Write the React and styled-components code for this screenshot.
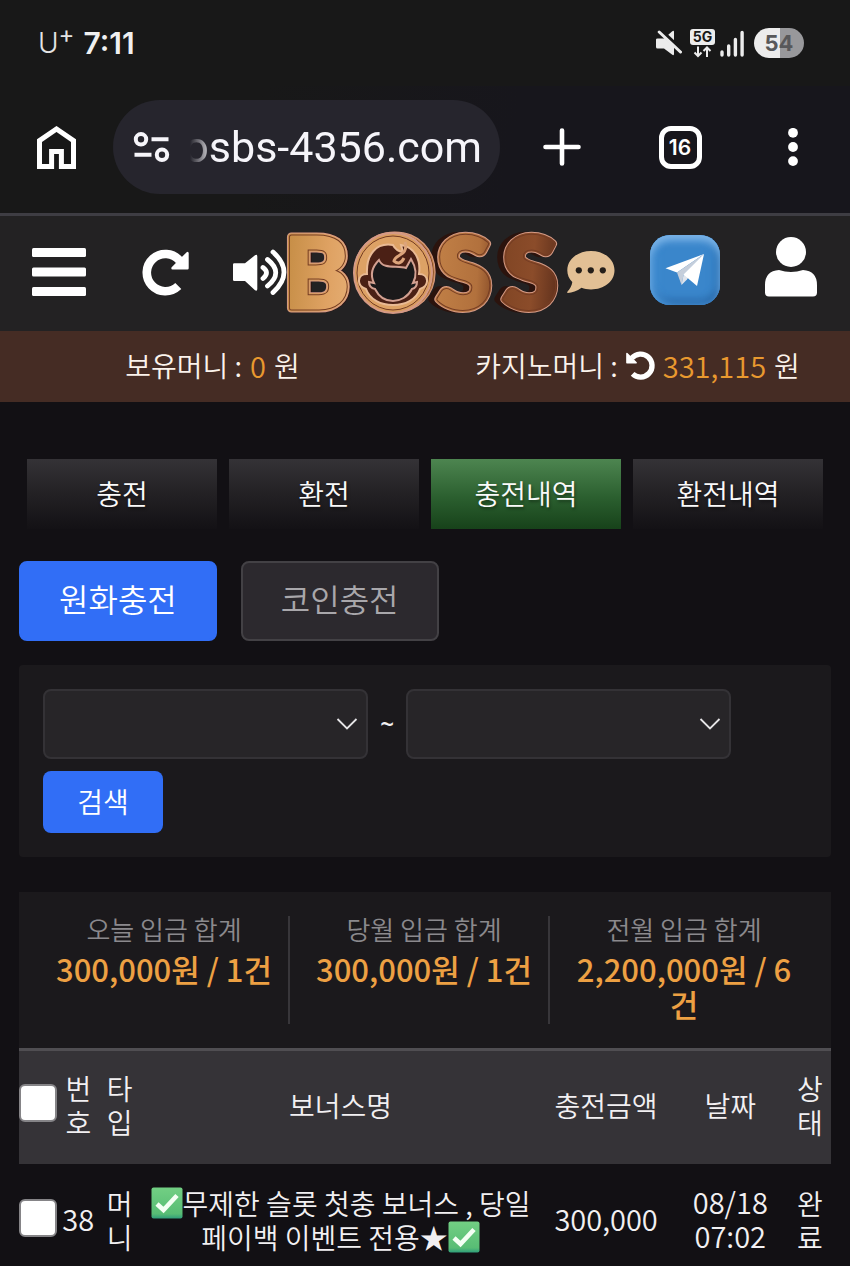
import React from 'react';
import styled, { createGlobalStyle } from 'styled-components';

const korean = '"Noto Sans CJK KR", "Noto Sans", sans-serif';

const GlobalStyle = createGlobalStyle`
  *, *::before, *::after { box-sizing: border-box; }
  body { margin: 0; background: #121014; color: #f2f0f2; font-family: ${korean}; font-size: 28px; font-weight: 350; }
  button, input, select { font: inherit; color: inherit; margin: 0; }
  svg { display: block; flex: none; }
`;

/* ---------- device status bar ---------- */
const StatusBar = styled.div`
  display: flex;
  align-items: center;
  justify-content: space-between;
  height: 86px;
  padding: 0 46px 0 38px;
  background: #181818;
  font-family: Inter, "Liberation Sans", sans-serif;
`;
const StatusGroup = styled.div`
  display: flex;
  align-items: center;
  gap: ${(p) => p.$gap}px;
`;
const Carrier = styled.span`
  display: flex;
  font-size: 28px;
  font-weight: 300;
  line-height: 36px;
  color: #e4e4e4;
  sup { font-size: 24px; font-weight: 400; line-height: 20px; }
`;
const Clock = styled.time`
  font-size: 30px;
  font-weight: 600;
  line-height: 36px;
  color: #f0f0f0;
`;
const Battery = styled.span`
  display: grid;
  place-items: center;
  width: 50px;
  height: 30px;
  margin-left: 4px;
  border-radius: 15px;
  background: linear-gradient(90deg, #ececec 52%, #98989b 52%);
  color: #58585a;
  font-size: 22px;
  font-weight: 700;
`;

/* ---------- browser toolbar ---------- */
const BrowserBar = styled.div`
  display: grid;
  grid-template-columns: 113px minmax(0, 1fr) 124px 112px 114px;
  align-items: center;
  padding: 14px 0 19px;
  background: linear-gradient(100deg, #181818 30%, #17161c 60%);
`;
const IconButton = styled.button`
  display: flex;
  align-items: center;
  justify-content: ${(p) => p.$align || 'center'};
  width: 100%;
  padding: 0 0 ${(p) => p.$lift || 0}px;
  border: 0;
  background: none;
  color: #fff;
  cursor: pointer;
`;
const AddressPill = styled.div`
  display: flex;
  align-items: center;
  gap: 12px;
  height: 94px;
  padding: 0 18px 0 20px;
  border-radius: 47px;
  background: #26252d;
`;
const Address = styled.input`
  flex: 1;
  min-width: 0;
  height: 64px;
  padding: 0;
  border: 0;
  outline: 0;
  background: none;
  color: #f6f5fa;
  font-family: Roboto, "Liberation Sans", sans-serif;
  font-size: 43px;
  font-weight: 400;
  text-align: right;
  mask-image: linear-gradient(90deg, transparent 8px, #000 32px);
`;
const TabCount = styled.span`
  display: grid;
  place-items: center;
  width: 43px;
  height: 43px;
  border: 5px solid #fff;
  border-radius: 12px;
  font-family: Inter, sans-serif;
  font-size: 21px;
  font-weight: 600;
`;

/* ---------- site header ---------- */
const SiteHeader = styled.header`
  display: grid;
  grid-template-columns: 118px 94px 75px minmax(0, 1fr) 75px 95px 118px;
  align-items: center;
  height: 118px;
  padding-bottom: 3px;
  border-top: 3px solid #3e3d43;
  background: #232223;
`;
const LogoLink = styled.a`
  display: flex;
  justify-content: center;
  svg { overflow: visible; }
`;
const ChatButton = styled(IconButton)`
  padding-left: 5px;
`;
const TelegramLink = styled.a`
  display: grid;
  place-items: center;
  justify-self: center;
  width: 70px;
  height: 70px;
  margin-bottom: 5px;
  border-radius: 20px;
  background: #3a86cb;
  box-shadow: inset 0 6px 7px #79b2e6, inset 6px 0 7px #4590d3, inset 0 -6px 7px #2d6eaf, inset -6px 0 7px #337abd;
`;
const MoneyBar = styled.section`
  display: flex;
  height: 71px;
  background: #452c24;
  color: #fbf3ec;
`;
const Money = styled.p`
  display: flex;
  flex: 1;
  align-items: center;
  justify-content: center;
  gap: 8px;
  margin: 0;
  padding-bottom: 3px;
  line-height: 40px;
  white-space: nowrap;
`;
const Amount = styled.span`
  color: #e9992f;
  font-size: 29px;
`;
const InlineButton = styled.button`
  padding: 0;
  border: 0;
  background: none;
  color: #fff;
  cursor: pointer;
`;

/* ---------- page ---------- */
const TabNav = styled.nav`
  display: grid;
  grid-template-columns: repeat(4, 1fr);
  gap: 12px;
  padding: 57px 27px 0;
`;
const TabLink = styled.a`
  display: grid;
  place-items: center;
  height: 70px;
  padding-bottom: 2px;
  color: #fafafa;
  line-height: 40px;
  text-decoration: none;
  text-shadow: 1px 2px 3px #0006;
  background: ${(p) =>
    p.$active ? 'linear-gradient(#4d8550, #2b5f2f 55%, #17421a)' : 'linear-gradient(#343236, #232124 50%, #131115)'};
`;
const Content = styled.main`
  padding: 32px 19px 0;
`;
const Methods = styled.div`
  display: flex;
  gap: 24px;
`;
const MethodButton = styled.button`
  height: 80px;
  padding: 0 38px 6px;
  border: 2px solid ${(p) => (p.$active ? '#316ef6' : '#434145')};
  border-radius: 8px;
  background: ${(p) => (p.$active ? '#316ef6' : '#2c292e')};
  color: ${(p) => (p.$active ? '#fff' : '#a9a7ab')};
  font-size: 32px;
  line-height: 48px;
  cursor: pointer;
`;
const FilterForm = styled.form`
  display: flex;
  flex-wrap: wrap;
  align-items: center;
  gap: 12px;
  margin-top: 24px;
  padding: 24px;
  border-radius: 4px;
  background: #1b191c;
`;
const DatePick = styled.label`
  display: grid;
  grid-template-areas: "field";
  align-items: center;
  flex: 0 1 325px;
  svg { grid-area: field; justify-self: end; margin-right: 10px; pointer-events: none; }
`;
const DateSelect = styled.select`
  grid-area: field;
  appearance: none;
  width: 100%;
  height: 70px;
  padding: 0 40px 0 16px;
  border: 2px solid #343236;
  border-radius: 8px;
  background: #272528;
`;
const Tilde = styled.span`
  width: 14px;
  font-family: "Noto Sans", sans-serif;
  font-size: 24px;
  font-weight: 600;
  line-height: 36px;
  text-align: center;
`;
const SearchButton = styled.button`
  width: 120px;
  height: 62px;
  padding: 0 0 3px;
  border: 0;
  border-radius: 8px;
  background: #316ef6;
  color: #fff;
  cursor: pointer;
`;
const Totals = styled.dl`
  display: grid;
  grid-template-columns: repeat(3, 1fr);
  gap: 10px;
  margin: 35px 0 0;
  padding: 24px 21px;
  background: #1b191c;
`;
const Total = styled.div`
  padding: 0 12px 3px;
  border-right: 2px solid ${(p) => (p.$last ? 'transparent' : '#38363a')};
  text-align: center;
`;
const TotalLabel = styled.dt`
  margin-bottom: 9px;
  color: #8b898d;
  font-size: 26px;
  line-height: 26px;
`;
const TotalValue = styled.dd`
  margin: 0;
  color: #eda043;
  font-size: 31px;
  font-weight: 500;
  line-height: 35px;
`;

/* ---------- history table ---------- */
const Table = styled.table`
  width: 100%;
  border-collapse: collapse;
  table-layout: fixed;
  line-height: 34px;
  text-align: center;
`;
const Col = styled.col`
  width: ${(p) => p.$share}%;
`;
const HeadRow = styled.tr`
  height: 114px;
  border-top: 3px solid #504e52;
  background: #353337;
`;
const HeadCell = styled.th`
  padding: 0 0 5px;
  font-weight: 350;
`;
const Cell = styled.td`
  padding: ${(p) => (p.$numeric ? '20px 0 16px' : '22px 0 14px')};
  font-size: ${(p) => (p.$numeric ? 29 : 28)}px;
`;
const Check = styled.input`
  appearance: none;
  display: block;
  width: 38px;
  height: 38px;
  margin-bottom: 4px;
  border: 2px solid #858487;
  border-radius: 6px;
  background: #fff;
  &:checked { background: #316ef6; }
`;
const EmojiCheck = styled.svg`
  display: inline-block;
  vertical-align: -4px;
`;

const HomeIcon = () => (
  <svg width="39" height="43" viewBox="0 0 39 43" fill="none" stroke="currentColor" strokeWidth="5">
    <path d="M2.5 40.5V14.6L19.5 3l17 11.600V40.500H24.400V25.600H14.600V40.500Z" />
  </svg>
);
const TuneIcon = () => (
  <svg width="37" height="30" viewBox="0 0 37 30" fill="none" stroke="#f6f5fa" strokeWidth="4">
    <circle cx="8" cy="7.300" r="5.200" /><path d="M18.500 7.300H35.500M1.500 22.800H18.500" /><circle cx="29" cy="22.800" r="5.200" />
  </svg>
);
const PlusIcon = () => (
  <svg width="38" height="38" viewBox="0 0 38 38" stroke="currentColor" strokeWidth="4.600" strokeLinecap="round">
    <path d="M19 2.500V35.500M2.500 19H35.500" />
  </svg>
);
const DotsIcon = () => (
  <svg width="10" height="38" viewBox="0 0 10 38" fill="currentColor">
    <circle cx="5" cy="4.800" r="4.900" /><circle cx="5" cy="19" r="4.900" /><circle cx="5" cy="33.100" r="4.900" />
  </svg>
);
const MuteIcon = () => (
  <svg width="26" height="26" viewBox="0 0 26 26" fill="#ececec">
    <path d="M0 9.500Q0 8.500 1.500 8.500H8L16 1.500Q18 0 18 2V24Q18 26 16 24.500L8 18.500H1.500Q0 18.500 0 17Z" />
    <path d="M4 .5L26 21" stroke="#181818" strokeWidth="5" />
    <path d="M3.200 2L24.500 22" stroke="#ececec" strokeWidth="3" strokeLinecap="round" />
  </svg>
);
const NetworkIcon = () => (
  <svg width="25" height="29" viewBox="0 0 25 29">
    <rect width="25" height="16" rx="3" fill="#ececec" />
    <text x="12.500" y="13" textAnchor="middle" fontFamily="Inter, sans-serif" fontWeight="700" fontSize="14" fill="#181818">5G</text>
    <path d="M8 17.500V27M4.500 23.500L8 27l3.500-3.500M17 28V18.500M13.500 22L17 18.500l3.500 3.500" fill="none" stroke="#ececec" strokeWidth="2" />
  </svg>
);
const SignalIcon = () => (
  <svg width="25" height="27" viewBox="0 0 25 27" stroke="#ececec" strokeWidth="3.400" strokeLinecap="round">
    <path d="M2 22V25M8.700 16V25M15.400 9.500V25M22.100 2.500V25" />
  </svg>
);
const MenuIcon = () => (
  <svg width="54" height="48" viewBox="0 0 54 48" fill="currentColor">
    <rect width="54" height="9" rx="1.500" /><rect y="19.500" width="54" height="9" rx="1.500" /><rect y="39" width="54" height="9" rx="1.500" />
  </svg>
);
const TurnIcon = ({ size, flip }) => (
  <svg width={size} height={size} viewBox="0 0 47 47" fill="none" stroke="currentColor">
    <g transform={flip ? 'translate(47 0) scale(-1 1)' : undefined}>
      <path d="M37.500 11.500A18.600 18.600 0 1 0 36.300 37" strokeWidth="8.600" />
      <path d="M45.500 4V19.200H30.500Z" fill="currentColor" strokeWidth="2.400" strokeLinejoin="round" />
    </g>
  </svg>
);
const SoundIcon = () => (
  <svg width="54" height="46" viewBox="0 0 54 46" fill="currentColor">
    <path d="M0 15.500Q0 14.300 1.200 14.300H12L22 6.300Q24.300 5 24.300 7.500V40Q24.300 42.500 22 41.300L12 32H1.200Q0 32 0 30.800Z" />
    <g fill="none" stroke="currentColor" strokeWidth="4.800" strokeLinecap="round">
      <path d="M30 18.500Q37 23.500 30 29.500M34.500 10.500Q51 23.500 34.500 37M40 3Q62 23 40 43.500" />
    </g>
  </svg>
);
const ChatIcon = () => (
  <svg width="48" height="43" viewBox="0 0 48 43">
    <path d="M24 0C37 0 47.500 8 47.500 19.300S37 38.500 24 38.500C20 38.500 17.500 38 14.500 36.800C10 40 5 42 .8 42C-.3 41.800.2 41 .8 40.300C3 37.500 5 34.500 5.300 31C2 27.800.3 24 .3 19.300C.3 8 11 0 24 0Z" fill="#e2c095" />
    <g fill="#241e19"><circle cx="11.800" cy="19.300" r="3.100" /><circle cx="23.800" cy="19.300" r="3.100" /><circle cx="35.800" cy="19.300" r="3.100" /></g>
  </svg>
);
const PlaneIcon = () => (
  <svg width="40" height="34" viewBox="0 0 40 34">
    <path d="M39 1L.5 15.200L12 19.500Z" fill="#fff" />
    <path d="M39 1L12 19.500L16.500 32L18.500 22Z" fill="#c5cedb" />
    <path d="M39 1L18.500 22L16.500 32L22 26.500Z" fill="#dfe4ec" />
    <path d="M39 1L18.500 21.500L32 33Z" fill="#fff" />
  </svg>
);
const UserIcon = () => (
  <svg width="52" height="60" viewBox="0 0 52 60" fill="currentColor">
    <circle cx="26" cy="15" r="15" />
    <path d="M14 33Q26 37 38 33Q52 34 52 48V55.500Q52 59.500 48 59.500H4Q0 59.500 0 55.500V48Q0 34 14 33Z" />
  </svg>
);
const ChevronIcon = () => (
  <svg width="22" height="14" viewBox="0 0 22 14" fill="none" stroke="#e6e5e7" strokeWidth="1.800">
    <path d="M1.500 2L11 11.500L20.500 2" />
  </svg>
);

const letterStarts = '-3 68 150 216';
const depthStarts = '-2 68 144 210';
const logoType = { fontFamily: 'Lato, sans-serif', fontWeight: 900, fontSize: 98, strokeLinejoin: 'round' };
const BossLogo = () => (
  <svg width="275" height="84" viewBox="0 0 275 84" role="img" aria-label="BOSS">
    <defs>
      <linearGradient id="copper" gradientUnits="userSpaceOnUse" x1="0" y1="0" x2="275" y2="20">
        <stop offset="0" stopColor="#c58d45" /><stop offset=".16" stopColor="#dfa263" />
        <stop offset=".3" stopColor="#e8b47c" /><stop offset=".5" stopColor="#c58449" />
        <stop offset=".7" stopColor="#b2713d" /><stop offset=".78" stopColor="#804524" />
        <stop offset=".9" stopColor="#8b4c2a" /><stop offset="1" stopColor="#5f301c" />
      </linearGradient>
    </defs>
    <g {...logoType}>
      <text x={depthStarts} y="78" fill="#2b130d" stroke="#2b130d" strokeWidth="9" aria-hidden="true">BOSS</text>
      <text x={letterStarts} y="78" fill="none" stroke="#d59a85" strokeWidth="9" aria-hidden="true">BOSS</text>
      <text x={letterStarts} y="78" fill="none" stroke="url(#copper)" strokeWidth="7" aria-hidden="true">BOSS</text>
      <text x={letterStarts} y="78" fill="none" stroke="#753c23" strokeWidth="5" aria-hidden="true">BOSS</text>
      <text x={letterStarts} y="78" fill="url(#copper)" stroke="url(#copper)" strokeWidth="3">BOSS</text>
    </g>
    <ellipse cx="106" cy="43" rx="39" ry="40" fill="#d99c5d" stroke="#d59a85" strokeWidth="2" />
    <ellipse cx="106" cy="43" rx="36" ry="37" fill="#dda265" stroke="#753c23" strokeWidth="1" />
    <path d="M106 15C89 12 79 25 80 44C70 44 69 56 79 59C83 70 94 75 106 75S129 70 133 59C143 56 142 44 132 44C134 30 128 17 114 15L116 22Q109 21 106 15Z" fill="#4b2015" stroke="#e9ba94" strokeWidth="2" />
    <path d="M92 30C96 40 111 35 119 38L124 29Q132 42 126 53L130 52Q130 58 125 59C121 67 113 71 106 71S92 67 88 59Q82 58 82 52L87 53Q81 41 92 30Z" fill="#1b191a" stroke="#d3a091" strokeWidth="2" />
    <path d="M118 12C122 26 108 24 107 31Q113 36 117 28" fill="none" stroke="#dca47b" strokeWidth="3" />
  </svg>
);

const CheckMark = () => (
  <EmojiCheck width="32" height="32" viewBox="0 0 32 32" role="img" aria-label="✅">
    <defs>
      <linearGradient id="mint" x1="0" y1="0" x2="0" y2="1">
        <stop offset="0" stopColor="#72cf83" /><stop offset=".85" stopColor="#58bd75" /><stop offset="1" stopColor="#2f9e7a" />
      </linearGradient>
    </defs>
    <rect x=".5" y=".5" width="31" height="31" rx="2" fill="url(#mint)" />
    <path d="M6 17L12.500 23L26 8.500" fill="none" stroke="#f4fff4" strokeWidth="4.600" />
  </EmojiCheck>
);

const tabs = ['충전', '환전', '충전내역', '환전내역'];
const totals = [
  ['오늘 입금 합계', '300,000원 / 1건'],
  ['당월 입금 합계', '300,000원 / 1건'],
  ['전월 입금 합계', '2,200,000원 / 6건'],
];
const shares = [4.8, 5, 5.2, 49.2, 16.2, 14.4, 5.2];
const headings = ['번호', '타입', '보너스명', '충전금액', '날짜', '상태'];

export default function App() {
  return (
    <>
      <GlobalStyle />
      <StatusBar>
        <StatusGroup $gap={9}>
          <Carrier>U<sup>+</sup></Carrier>
          <Clock>7:11</Clock>
        </StatusGroup>
        <StatusGroup $gap={8}>
          <MuteIcon />
          <StatusGroup $gap={5}>
            <NetworkIcon />
            <SignalIcon />
            <Battery>54</Battery>
          </StatusGroup>
        </StatusGroup>
      </StatusBar>
      <BrowserBar>
        <IconButton aria-label="홈"><HomeIcon /></IconButton>
        <AddressPill>
          <TuneIcon />
          <Address size={1} aria-label="주소" defaultValue="osbs-4356.com" />
        </AddressPill>
        <IconButton aria-label="새 탭"><PlusIcon /></IconButton>
        <IconButton aria-label="탭 목록"><TabCount>16</TabCount></IconButton>
        <IconButton aria-label="더보기"><DotsIcon /></IconButton>
      </BrowserBar>

      <SiteHeader>
        <IconButton aria-label="메뉴"><MenuIcon /></IconButton>
        <IconButton aria-label="새로고침"><TurnIcon size={47} /></IconButton>
        <IconButton aria-label="소리" $align="flex-end"><SoundIcon /></IconButton>
        <LogoLink href="#home"><BossLogo /></LogoLink>
        <ChatButton aria-label="채팅" $align="flex-start"><ChatIcon /></ChatButton>
        <TelegramLink href="#telegram" aria-label="텔레그램"><PlaneIcon /></TelegramLink>
        <IconButton aria-label="내 정보" $lift={10}><UserIcon /></IconButton>
      </SiteHeader>
      <MoneyBar>
        <Money>보유머니 : <Amount>0</Amount> 원</Money>
        <Money>
          카지노머니 :
          <InlineButton aria-label="카지노머니 회수"><TurnIcon size={29} flip /></InlineButton>
          <Amount>331,115</Amount> 원
        </Money>
      </MoneyBar>

      <TabNav>
        {tabs.map((tab, i) => (
          <TabLink key={tab} href={`#tab${i}`} $active={i === 2}>{tab}</TabLink>
        ))}
      </TabNav>
      <Content>
        <Methods>
          <MethodButton $active>원화충전</MethodButton>
          <MethodButton>코인충전</MethodButton>
        </Methods>
        <FilterForm onSubmit={(e) => e.preventDefault()}>
          <DatePick>
            <DateSelect aria-label="시작일"><option value="" /></DateSelect>
            <ChevronIcon />
          </DatePick>
          <Tilde>~</Tilde>
          <DatePick>
            <DateSelect aria-label="종료일"><option value="" /></DateSelect>
            <ChevronIcon />
          </DatePick>
          <SearchButton>검색</SearchButton>
        </FilterForm>
        <Totals>
          {totals.map(([label, value], i) => (
            <Total key={label} $last={i === 2}>
              <TotalLabel>{label}</TotalLabel>
              <TotalValue>{value}</TotalValue>
            </Total>
          ))}
        </Totals>
        <Table>
          <colgroup>{shares.map((share, i) => <Col key={i} $share={share} />)}</colgroup>
          <thead>
            <HeadRow>
              <HeadCell><Check type="checkbox" aria-label="전체 선택" /></HeadCell>
              {headings.map((heading) => <HeadCell key={heading}>{heading}</HeadCell>)}
            </HeadRow>
          </thead>
          <tbody>
            <tr>
              <Cell><Check type="checkbox" aria-label="38번 선택" /></Cell>
              <Cell $numeric>38</Cell>
              <Cell>머니</Cell>
              <Cell><CheckMark />무제한 슬롯 첫충 보너스 , 당일 페이백 이벤트 전용★<CheckMark /></Cell>
              <Cell $numeric>300,000</Cell>
              <Cell $numeric>08/18 07:02</Cell>
              <Cell>완료</Cell>
            </tr>
          </tbody>
        </Table>
      </Content>
    </>
  );
}
